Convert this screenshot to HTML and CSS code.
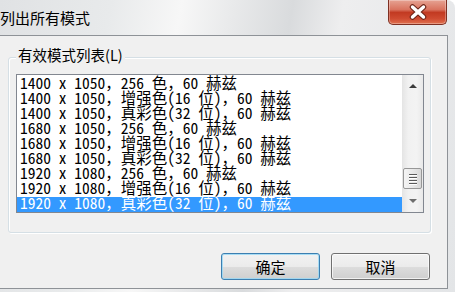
FILE: index.html
```html
<!DOCTYPE html>
<html lang="zh-CN">
<head>
    <meta charset="UTF-8">
    <title>列出所有模式</title>
    <link rel="stylesheet" href="styles.css">
</head>
<body>
    <div class="window">
        <div class="titlebar">
            <span class="title">列出所有模式</span>
            <button class="close-btn" aria-label="关闭">
                <svg width="20" height="16" viewBox="0 0 20 16">
                    <path d="M4.5 3 L15.5 13 M15.5 3 L4.5 13" stroke="#6b2317" stroke-width="5.5" stroke-linecap="round"/>
                    <path d="M4.5 3 L15.5 13 M15.5 3 L4.5 13" stroke="#fff" stroke-width="3.4" stroke-linecap="round"/>
                </svg>
            </button>
        </div>

        <div class="client">
            <div class="group">
                <span class="group-label">有效模式列表(L)</span>
                <div class="listbox">
                    <ul class="items">
                        <li>1400 x 1050，256 色，60 赫兹</li>
                        <li>1400 x 1050，增强色(16 位)，60 赫兹</li>
                        <li>1400 x 1050，真彩色(32 位)，60 赫兹</li>
                        <li>1680 x 1050，256 色，60 赫兹</li>
                        <li>1680 x 1050，增强色(16 位)，60 赫兹</li>
                        <li>1680 x 1050，真彩色(32 位)，60 赫兹</li>
                        <li>1920 x 1080，256 色，60 赫兹</li>
                        <li>1920 x 1080，增强色(16 位)，60 赫兹</li>
                        <li class="selected">1920 x 1080，真彩色(32 位)，60 赫兹</li>
                    </ul>
                    <div class="scrollbar">
                        <span class="scroll-btn up"><span class="arrow-up"></span></span>
                        <span class="track">
                            <span class="thumb">
                                <span class="grip"></span>
                                <span class="grip"></span>
                                <span class="grip"></span>
                                <span class="grip"></span>
                            </span>
                        </span>
                        <span class="scroll-btn down"><span class="arrow-down"></span></span>
                    </div>
                </div>
            </div>

            <div class="buttons">
                <button class="btn default">确定</button>
                <button class="btn">取消</button>
            </div>
        </div>
    </div>
</body>
</html>
```

FILE: styles.css
```css
* {
    margin: 0;
    padding: 0;
    box-sizing: border-box;
}

html,
body {
    background: #fff;
}

body {
    width: 455px;
    height: 292px;
    overflow: hidden;
    font-family: "Noto Sans CJK SC", "Noto Sans", sans-serif;
    color: #000;
}

/* Window frame */
.window {
    width: 455px;
    height: 292px;
    display: flex;
    flex-direction: column;
    border-top-right-radius: 8px;
    background: linear-gradient(100deg, #e0e2e4 0%, #e8eaeb 22%, #f7f7f7 36%, #e9eaeb 46%, #d9dbdd 58%, #eeeeef 68%, #e3e5e7 100%);
}

.titlebar {
    height: 35px;
    display: flex;
    justify-content: space-between;
    align-items: flex-start;
}

.title {
    padding-top: 8px;
    font-size: 15px;
    line-height: 20px;
}

.close-btn {
    width: 59px;
    height: 25px;
    margin-right: 8px;
    display: flex;
    align-items: center;
    justify-content: center;
    border: 1px solid #7e2f22;
    border-top: none;
    border-radius: 0 0 5px 5px;
    background: linear-gradient(#e6a393 0%, #d9735f 40%, #c23a22 52%, #cf4b31 78%, #e0714f 100%);
    box-shadow: inset 0 0 0 1px rgba(255, 255, 255, 0.3);
}

/* Client area */
.client {
    flex: 1;
    margin: 0 7px 3px 0;
    display: flex;
    flex-direction: column;
    background: #f0f0f0;
    border: 1px solid #8e9297;
    border-left: none;
}

.group {
    margin: 21px 16px 0 8px;
    padding: 0 6px 19px 7px;
    border: 1px solid #d5dfe5;
    border-radius: 3px;
    box-shadow: inset 1px 1px 0 #fff, 1px 1px 0 #fff;
}

.group-label {
    display: block;
    width: fit-content;
    margin-top: -11px;
    padding: 0 2px;
    background: #f0f0f0;
    font-size: 14.5px;
    line-height: 16px;
}

.listbox {
    margin-top: 11px;
    height: 139px;
    display: flex;
    background: #fff;
    border: 1px solid #828790;
}

.items {
    flex: 1;
    list-style: none;
    padding-top: 2px;
    font-family: "Noto Sans Mono CJK SC", "Noto Sans CJK SC", monospace;
    font-size: 15.5px;
}

/* tight rows, like the original listbox */
.items li {
    height: 15px;
    line-height: 11px;
    padding-left: 3px;
    white-space: pre;
}

.items li.selected {
    background: #3399ff;
    color: #fff;
}

/* Scrollbar */
.scrollbar {
    width: 21px;
    display: flex;
    flex-direction: column;
    background: linear-gradient(to right, #e4e4e4, #f1f1f1 30%, #f3f3f3 70%, #e9e9e9);
}

.scroll-btn {
    height: 22px;
    display: flex;
    align-items: center;
    justify-content: center;
}

.scroll-btn.down {
    height: 23px;
}

.arrow-up {
    border-left: 4px solid transparent;
    border-right: 4px solid transparent;
    border-bottom: 4px solid #3c3c3c;
}

.arrow-down {
    border-left: 4px solid transparent;
    border-right: 4px solid transparent;
    border-top: 4px solid #6e6e6e;
}

.track {
    flex: 1;
    display: flex;
    flex-direction: column;
    justify-content: flex-end;
    align-items: center;
}

.thumb {
    width: 19px;
    height: 21px;
    display: flex;
    flex-direction: column;
    justify-content: center;
    align-items: center;
    gap: 2px;
    border: 1px solid #979797;
    border-radius: 2px;
    background: linear-gradient(to right, #f4f4f4, #e8e8e8 50%, #d8d8d8);
}

.grip {
    width: 8px;
    height: 1px;
    background: #5a5a5a;
    box-shadow: 0 1px 0 #fff;
}

/* Buttons */
.buttons {
    display: flex;
    justify-content: flex-end;
    gap: 11px;
    margin: 20px 17px 0 0;
}

.btn {
    width: 99px;
    height: 27px;
    font-family: inherit;
    font-size: 15px;
    line-height: 25px;
    color: #000;
    border: 1px solid #707070;
    border-radius: 3px;
    background: linear-gradient(#f2f2f2 0%, #ebebeb 50%, #dddddd 50%, #cfcfcf 100%);
    box-shadow: inset 0 0 0 1px rgba(255, 255, 255, 0.7);
}

.btn.default {
    border-color: #3c7fb1;
    box-shadow: inset 0 0 0 1px rgba(150, 215, 245, 0.8);
}
```
